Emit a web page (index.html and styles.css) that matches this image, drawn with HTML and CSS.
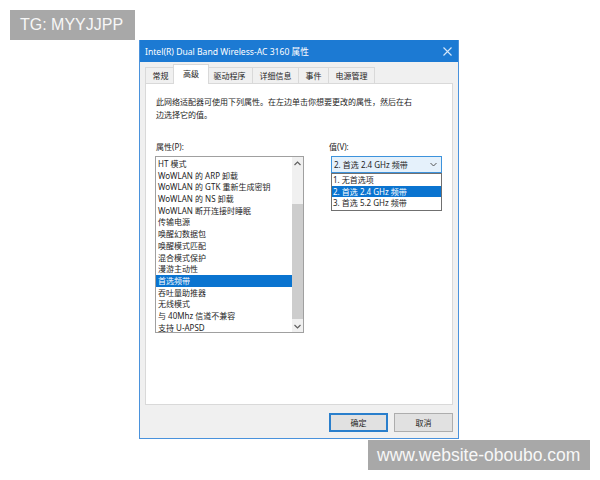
FILE: index.html
```html
<!DOCTYPE html>
<html lang="zh-CN">
<head>
    <meta charset="UTF-8">
    <meta name="viewport" content="width=device-width, initial-scale=1.0">
    <title>Intel(R) Dual Band Wireless-AC 3160 属性</title>
    <link rel="stylesheet" href="styles.css">
</head>
<body>
    <div class="page">
        <div class="window">
            <div class="titlebar">
                <span class="title">Intel(R) Dual Band Wireless-AC 3160 属性</span>
                <svg class="close" width="9" height="9" viewBox="0 0 9 9">
                    <path d="M0.5 0.5 L8.5 8.5 M8.5 0.5 L0.5 8.5" stroke="#d6e8fa" stroke-width="1.1" fill="none"/>
                </svg>
            </div>

            <div class="content">
                <div class="tabs">
                    <div class="tab first">常规</div>
                    <div class="tab active">高级</div>
                    <div class="tab">驱动程序</div>
                    <div class="tab">详细信息</div>
                    <div class="tab">事件</div>
                    <div class="tab">电源管理</div>
                </div>

                <div class="panel">
                    <p class="desc">此网络适配器可使用下列属性。在左边单击你想要更改的属性，然后在右<br>边选择它的值。</p>

                    <div class="columns">
                        <div class="col-left">
                            <div class="label">属性(P):</div>
                            <div class="listbox">
                                <div class="items">
                                    <div class="item">HT 模式</div>
                                    <div class="item">WoWLAN 的 ARP 卸载</div>
                                    <div class="item">WoWLAN 的 GTK 重新生成密钥</div>
                                    <div class="item">WoWLAN 的 NS 卸载</div>
                                    <div class="item">WoWLAN 断开连接时睡眠</div>
                                    <div class="item">传输电源</div>
                                    <div class="item">唤醒幻数据包</div>
                                    <div class="item">唤醒模式匹配</div>
                                    <div class="item">混合模式保护</div>
                                    <div class="item">漫游主动性</div>
                                    <div class="item selected">首选频带</div>
                                    <div class="item">吞吐量助推器</div>
                                    <div class="item">无线模式</div>
                                    <div class="item">与 40Mhz 信道不兼容</div>
                                    <div class="item">支持 U-APSD</div>
                                </div>
                                <div class="scrollbar">
                                    <div class="arrow">
                                        <svg width="7" height="5" viewBox="0 0 7 5"><path d="M0.5 4 L3.5 1 L6.5 4" stroke="#606060" stroke-width="1.2" fill="none"/></svg>
                                    </div>
                                    <div class="track">
                                        <div class="thumb"></div>
                                    </div>
                                    <div class="arrow">
                                        <svg width="7" height="5" viewBox="0 0 7 5"><path d="M0.5 1 L3.5 4 L6.5 1" stroke="#606060" stroke-width="1.2" fill="none"/></svg>
                                    </div>
                                </div>
                            </div>
                        </div>

                        <div class="col-right">
                            <div class="label">值(V):</div>
                            <div class="combo">
                                <span>2. 首选 2.4 GHz 频带</span>
                                <svg width="7" height="5" viewBox="0 0 7 5"><path d="M0.5 1 L3.5 4 L6.5 1" stroke="#555" stroke-width="1" fill="none"/></svg>
                            </div>
                            <div class="dropdown">
                                <div class="option">1. 无首选项</div>
                                <div class="option selected">2. 首选 2.4 GHz 频带</div>
                                <div class="option">3. 首选 5.2 GHz 频带</div>
                            </div>
                        </div>
                    </div>
                </div>

                <div class="buttons">
                    <button class="btn default">确定</button>
                    <button class="btn">取消</button>
                </div>
            </div>
        </div>
    </div>

    <div class="mark mark-tg">TG: MYYJJPP</div>
    <div class="mark mark-site">www.website-oboubo.com</div>
</body>
</html>
```

FILE: styles.css
```css
body {
    margin: 0;
    background-color: #ffffff;
    font-family: "Noto Sans", "Noto Sans CJK SC", sans-serif;
    color: #1e1e1e;
}

.page {
    padding: 40px 0 0 139px;
}

.window {
    width: 320px;
    height: 399px;
    box-sizing: border-box;
    border: 1px solid #4a92dc;
    border-top: none;
    display: flex;
    flex-direction: column;
    background-color: #f0f0f0;
}

.titlebar {
    height: 22px;
    flex-shrink: 0;
    background-color: #1c7ad3;
    color: #ffffff;
    font-size: 8.6px;
    display: flex;
    align-items: center;
    justify-content: space-between;
    padding: 0 6px 0 5px;
}

.content {
    flex: 1;
    display: flex;
    flex-direction: column;
    padding: 5px 5px 0 5px;
}

.tabs {
    display: flex;
    height: 16px;
    align-items: flex-end;
    font-size: 8px;
}

.tab {
    height: 16px;
    line-height: 15px;
    box-sizing: border-box;
    padding: 0 6.5px;
    border: 1px solid #d9d9d9;
    border-bottom: none;
    margin-left: -1px;
    background-color: #f0f0f0;
}

.tab.first {
    margin-left: 0;
}

.tab.active {
    height: 20px;
    line-height: 17px;
    margin: -2px -2px -1px -3px;
    padding: 0 9px;
    background-color: #ffffff;
    position: relative;
    z-index: 1;
}

.panel {
    height: 322px;
    box-sizing: border-box;
    background-color: #ffffff;
    border: 1px solid #d9d9d9;
    padding: 12px 0 0 10px;
    font-size: 8px;
}

.desc {
    margin: 0;
    line-height: 12.5px;
}

.columns {
    display: flex;
    gap: 25px;
    margin-top: 20px;
}

.label {
    line-height: 12px;
    margin-bottom: 3px;
}

.listbox {
    margin-left: -1px;
    width: 149px;
    height: 177px;
    box-sizing: border-box;
    border: 1px solid #a0a0a0;
    display: flex;
}

.items {
    flex: 1;
    padding-top: 1px;
}

.item {
    height: 11.7px;
    line-height: 11.7px;
    padding-left: 2px;
    white-space: nowrap;
}

.item.selected,
.option.selected {
    background-color: #0a74d0;
    color: #ffffff;
}

.scrollbar {
    width: 11px;
    display: flex;
    flex-direction: column;
    background-color: #f0f0f0;
}

.arrow {
    height: 12px;
    display: flex;
    align-items: center;
    justify-content: center;
}

.track {
    flex: 1;
    display: flex;
    flex-direction: column;
    justify-content: flex-end;
}

.thumb {
    height: 115px;
    margin-bottom: 1px;
    background-color: #cdcdcd;
}

.col-right {
    width: 113px;
}

.combo {
    margin-left: 2px;
    height: 17px;
    box-sizing: border-box;
    border: 1px solid #3d93dc;
    background-color: #e5f1fb;
    display: flex;
    align-items: center;
    justify-content: space-between;
    padding: 0 4px 0 2px;
}

.dropdown {
    margin-left: 2px;
    border: 1px solid #707070;
    padding-bottom: 1px;
}

.option {
    height: 11.7px;
    line-height: 11.7px;
    padding-left: 1px;
    white-space: nowrap;
}

.buttons {
    display: flex;
    justify-content: flex-end;
    gap: 6px;
    margin-top: 8px;
}

.btn {
    width: 59px;
    height: 19px;
    margin: 0;
    padding: 0;
    font-family: "Noto Sans", "Noto Sans CJK SC", sans-serif;
    font-size: 8px;
    color: #1e1e1e;
    background-color: #e1e1e1;
    border: 1px solid #adadad;
}

.btn.default {
    border: 2px solid #2a7fcc;
}

.mark {
    position: absolute;
    height: 30px;
    line-height: 30px;
    background-color: #a8a8a8;
    color: #f7f7f7;
    font-family: "Liberation Sans", Arial, sans-serif;
    box-sizing: border-box;
}

.mark-tg {
    left: 10px;
    top: 10px;
    width: 125px;
    padding-left: 10px;
    font-size: 16px;
}

.mark-site {
    left: 368px;
    top: 440px;
    width: 222px;
    padding-left: 9px;
    font-size: 17.5px;
}
```
